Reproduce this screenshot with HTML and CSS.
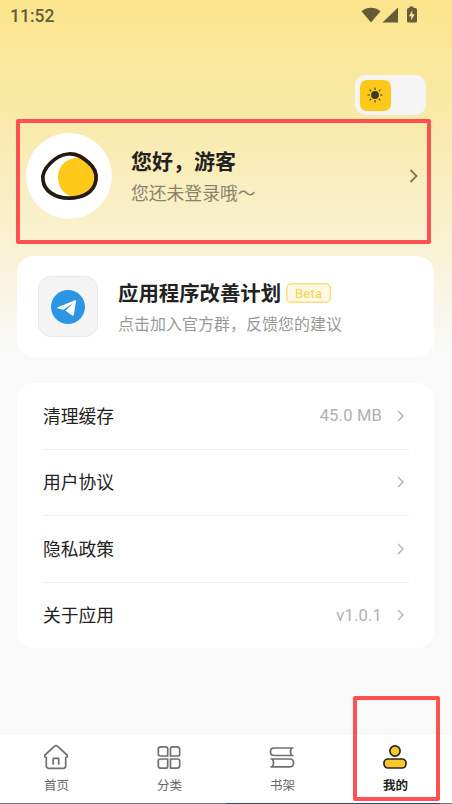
FILE: index.html
```html
<!DOCTYPE html>
<html lang="zh-CN">
<head>
<meta charset="utf-8">
<title>我的</title>
<link rel="stylesheet" href="styles.css">
</head>
<body>
<div class="screen">
  <header class="status">
    <span class="time">11:52</span>
    <svg class="status-icons" width="58" height="20" viewBox="0 0 58 20">
      <path d="M1.500 4.200C7 -.3 15 -.3 20.500 4.200L11 15.500z"/>
      <path d="M38 .5v15H22.500z"/>
      <path fill-rule="evenodd" d="M49.500 -.5h4v1.500h2a1.500 1.500 0 0 1 1.500 1.500v11.500a1.500 1.500 0 0 1-1.500 1.500h-7a1.500 1.500 0 0 1-1.500-1.500V2.500a1.500 1.500 0 0 1 1.500-1.500h1zM52.300 3.300L49 9.300h2.200v4l3.600-6H52.300z"/>
    </svg>
  </header>
  <div class="theme-row">
    <div class="switch">
      <div class="knob">
        <svg width="16" height="16" viewBox="0 0 16 16">
          <circle cx="8" cy="8" r="3.900" fill="#3b3732"/>
          <path d="M8 1v1.400M8 13.600V15M1 8h1.400M13.600 8H15M3 3l.8.8M12.200 12.200l.8.8M13 3l-.8.8M3.800 12.200l-.8.8" stroke="#3b3732" stroke-width="1.100" stroke-linecap="round"/>
        </svg>
      </div>
    </div>
  </div>
  <section class="profile">
    <div class="avatar">
      <svg width="86" height="86" viewBox="0 0 86 86">
        <path d="M58 26C43 22 31 32 32 46C33 56 39 62 47 64C58 64 70 58 70 45C70 38 64 31 58 26z" fill="#fec919"/>
        <path d="M42 21C51 20 57 25 62 29C68 34 71 40 70 47C68 60 56 65 43 65.200C29 65 18 58 17 47C15 36 30 22 42 21z" fill="none" stroke="#241a14" stroke-width="3.700"/>
      </svg>
    </div>
    <div class="who">
      <h1>您好，游客</h1>
      <p>您还未登录哦～</p>
    </div>
    <svg class="arrow-lg" width="10" height="14" viewBox="0 0 10 14"><path d="M1.500 1L7.500 7L1.500 13"/></svg>
  </section>
  <section class="card plan">
    <div class="app-icon">
      <svg width="34" height="34" viewBox="0 0 34 34">
        <circle cx="17" cy="17" r="17" fill="#2d96e3"/>
        <path d="M6.300 18.300Q5.500 17.700 6.800 17.200L24 10.200Q25.200 9.900 25 11.300L22.800 25Q22.300 26.300 21.200 25.500L14.500 20.800L22 13.300L12.300 19.700z" fill="#fff"/>
      </svg>
    </div>
    <div class="plan-text">
      <div class="plan-title"><h2>应用程序改善计划</h2><span class="beta">Beta</span></div>
      <p>点击加入官方群，反馈您的建议</p>
    </div>
  </section>
  <ul class="card list">
    <li><span>清理缓存</span><em>45.0 MB</em><svg class="arrow" width="8" height="12" viewBox="0 0 8 12"><path d="M1 1L6 6L1 11"/></svg></li>
    <li><span>用户协议</span><svg class="arrow" width="8" height="12" viewBox="0 0 8 12"><path d="M1 1L6 6L1 11"/></svg></li>
    <li><span>隐私政策</span><svg class="arrow" width="8" height="12" viewBox="0 0 8 12"><path d="M1 1L6 6L1 11"/></svg></li>
    <li><span>关于应用</span><em>v1.0.1</em><svg class="arrow" width="8" height="12" viewBox="0 0 8 12"><path d="M1 1L6 6L1 11"/></svg></li>
  </ul>
  <nav class="tabs">
    <a class="tab">
      <svg width="26" height="26" viewBox="0 0 26 26"><path d="M11.600 2.200Q13 .9 14.400 2.200L24 11Q25 13.500 22.700 13.500V22Q22.700 24.300 20.400 24.300H5.600Q3.300 24.300 3.300 22V13.500Q1 13.500 2 11zM10.200 20.700V14.300H15.700V20.700"/></svg>
      <span>首页</span>
    </a>
    <a class="tab">
      <svg width="26" height="26" viewBox="0 0 26 26"><path d="M5 2.800H9.700Q11.700 2.800 11.700 4.800V12H4.300Q2.300 12 2.300 10V5.500Q2.300 2.800 5 2.800zM16.500 2.800H21Q23.700 2.800 23.700 5.500V10Q23.700 12 21.700 12H14.500V4.800Q14.500 2.800 16.500 2.800zM4.300 15H11.700V22.200Q11.700 24.200 9.700 24.200H5Q2.300 24.200 2.300 21.500V17Q2.300 15 4.300 15zM14.500 15H21.700Q23.700 15 23.700 17V21.500Q23.700 24.200 21 24.200H14.500z"/></svg>
      <span>分类</span>
    </a>
    <a class="tab">
      <svg width="26" height="26" viewBox="0 0 26 26"><path d="M24.500 4H5Q1.500 4 1.500 7.500Q1.500 11.500 5 11.500H24.500M22.500 4Q20.500 7.700 22.500 11.500M1.500 15H21Q24.500 15 24.500 19Q24.500 22.800 21 22.800H1.500M3.500 15Q5.500 19 3.500 22.800"/></svg>
      <span>书架</span>
    </a>
    <a class="tab active">
      <svg width="26" height="26" viewBox="0 0 26 26"><circle cx="13" cy="7" r="5.100"/><rect x="2" y="15" width="22" height="9" rx="4"/></svg>
      <span>我的</span>
    </a>
  </nav>
  <div class="edge"></div>
  <div class="mark mark-profile"></div>
  <div class="mark mark-tab"></div>
</div>
</body>
</html>
```
FILE: styles.css
```css
* { box-sizing: border-box; margin: 0; padding: 0; }
body { font-family: Roboto, "Noto Sans CJK SC", sans-serif; color: #222; }
.screen {
  position: relative;
  width: 452px;
  height: 804px;
  overflow: hidden;
  display: flex;
  flex-direction: column;
  background: linear-gradient(#fae58c 0, #f9e9a4 100px, #f9f0cb 220px, #f9f9f9 350px);
}
.status {
  height: 32px;
  padding: 0 34px 0 10px;
  display: flex;
  align-items: center;
  justify-content: space-between;
}
.time { font-size: 17.500px; font-weight: 500; line-height: 32px; color: #665d38; }
.status-icons { fill: #665d38; margin-top: 2px; overflow: visible; }
.theme-row { height: 83px; padding: 43px 26px 0 0; display: flex; justify-content: flex-end; }
.switch { width: 71px; height: 40px; padding: 5px; border-radius: 11px; background: #f5f5f5; }
.knob {
  width: 31px; height: 31px; border-radius: 7px; background: #fec919;
  display: flex; align-items: center; justify-content: center;
}
.knob svg { margin: -1px 0 0 -1px; }
.profile { height: 141px; padding: 18px 33px 0 26px; display: flex; align-items: flex-start; }
.avatar { width: 86px; height: 86px; border-radius: 50%; background: #fff; }
.who { flex: 1; padding: 14px 0 0 19px; }
.who h1 { font-size: 21px; line-height: 30px; font-weight: 700; }
.who p { margin-top: 3px; font-size: 17.800px; line-height: 28px; color: #88836c; }
svg { display: block; flex: none; }
.arrow-lg { margin-top: 36px; fill: none; stroke: #7d765b; stroke-width: 1.800; }
.card { margin: 0 18px 0 17px; background: #fff; border-radius: 17px; }
.plan { height: 101px; padding: 20px 20px 0 21px; display: flex; }
.app-icon {
  width: 60px; height: 61px; border: 1px solid #e8e8e8; border-radius: 13px; background: #f4f4f4;
  display: flex; align-items: center; justify-content: center;
}
.plan-text { padding: 3px 0 0 20px; }
.plan-title { display: flex; align-items: flex-start; height: 30px; }
.plan-title h2 { font-size: 20.400px; line-height: 30px; font-weight: 700; }
.beta {
  width: 45px; height: 20px; margin: 4px 0 0 5px; border: 1px solid #fddf79; border-radius: 5px;
  background: #fff9e6; color: #fcd144; font-size: 13px; line-height: 19px; text-align: center; letter-spacing: .2px;
  box-shadow: inset 0 0 0 .5px #fddf79;
}
.plan-text p { margin-top: 3px; font-size: 16px; line-height: 26px; color: #999; white-space: nowrap; }
.list { height: 265px; margin-top: 26px; padding: 0 25px 0 26px; list-style: none; }
.list li { height: 66.500px; display: flex; align-items: center; border-bottom: 1px solid #eee; }
.list li:last-child { border: 0; height: 65.500px; }
.list span { flex: 1; font-size: 17.800px; padding-bottom: 2px; }
.list em { font-style: normal; font-size: 16.500px; letter-spacing: .2px; color: #b0b0b0; margin-right: 15px; }
.arrow { margin-right: 4px; fill: none; stroke: #b0b0b0; stroke-width: 1.400; }
.tabs {
  height: 70px; margin-top: auto; background: #fff; border-top: 1px solid #f4f4f4;
  display: grid; grid-template-columns: repeat(4, 1fr);
}
.tab { display: flex; flex-direction: column; align-items: center; padding-top: 10px; font-size: 12.500px; line-height: 18px; color: #666; }
.tab span { margin-top: 7px; }
.tab svg { margin-right: 1px; fill: none; stroke: #707070; stroke-width: 1.700; stroke-linejoin: round; }
.tab.active { color: #222; font-weight: 700; }
.tab.active svg { fill: #f9c927; stroke: #292722; }
.edge { height: 1px; flex: none; background: linear-gradient(90deg, #777 0 226px, #304778 226px 440px, #777 440px); }
.mark { position: absolute; border: 4px solid #ff5152; border-radius: 2px; }
.mark-profile { left: 16px; top: 119px; width: 415px; height: 125px; }
.mark-tab { left: 353px; top: 696px; width: 87px; height: 105px; }
```
